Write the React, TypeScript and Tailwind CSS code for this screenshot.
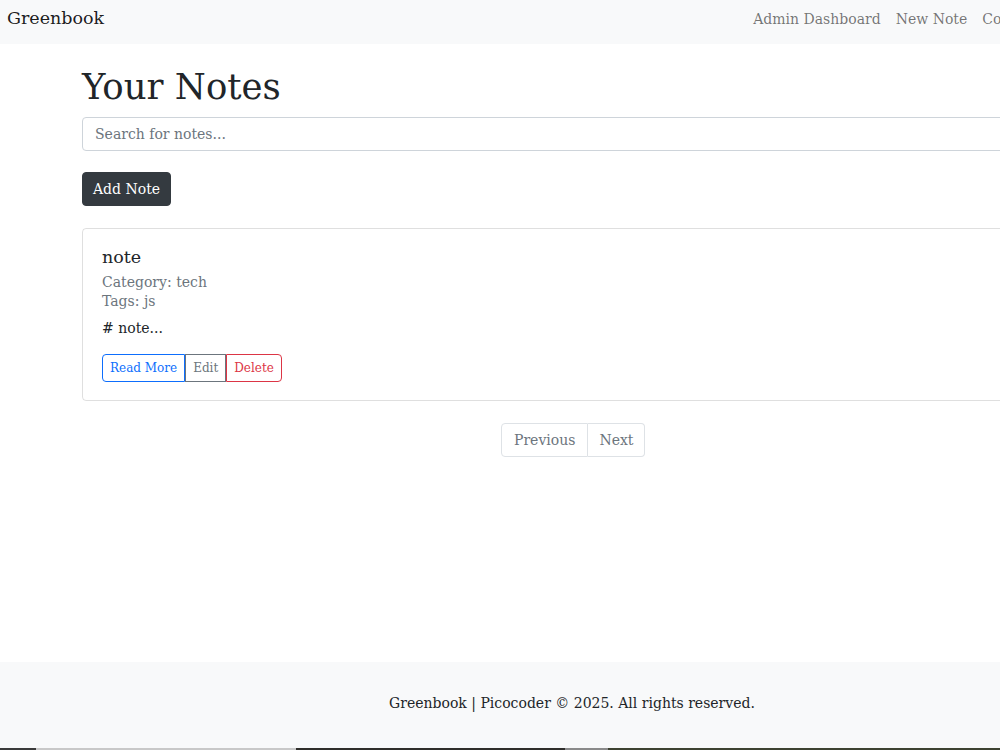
export default function App() {
  return (
    <div className="w-[1000px] h-[750px] overflow-hidden bg-white text-[#212529] font-['DejaVu_Serif',serif]">
      <div className="w-[1304px] flex flex-col h-[748px]">
        <nav className="bg-[#f8f9fa] h-[44px] flex items-start pt-[6px] px-[7px]">
          <span className="text-[17.5px] leading-[24px] text-black/90">Greenbook</span>
          <div className="flex gap-[15px] ml-[649px] pt-[2px] text-[14px] leading-[22px] text-black/55">
            <span>Admin Dashboard</span>
            <span>New Note</span>
            <span>Contact</span>
          </div>
        </nav>

        <main className="flex-1 w-[1140px] mx-auto">
          <h1 className="text-[35.5px] leading-[48px] mt-[19px] mb-[6px] font-normal">Your Notes</h1>
          <div className="flex">
            <input
              placeholder="Search for notes..."
              className="flex-1 h-[34px] border border-[#ced4da] rounded-l px-[12px] text-[14px] placeholder:text-[#6c757d] outline-none"
            />
            <button className="h-[34px] px-[12px] border border-[#0d6efd] text-[#0d6efd] rounded-r text-[14px]">Search</button>
          </div>
          <button className="mt-[21px] h-[34px] px-[10px] bg-[#343a40] text-white rounded text-[14px] border border-[#343a40]">
            Add Note
          </button>

          <div className="mt-[22px] border border-black/[.125] rounded px-[19px] pt-[16px] pb-[18px]">
            <h5 className="text-[17.5px] leading-[24px] mb-[4px]">note</h5>
            <p className="text-[#6c757d] text-[14px] leading-[19px]">Category: tech</p>
            <p className="text-[#6c757d] text-[14px] leading-[19px]">Tags: js</p>
            <p className="text-[14px] mt-[8px] leading-[19px]"># note...</p>
            <div className="flex mt-[16px]">
              <button className="h-[28px] px-[7px] text-[12px] text-[#0d6efd] border border-[#0d6efd] rounded-l">Read More</button>
              <button className="h-[28px] px-[7px] text-[12px] text-[#6c757d] border border-[#6c757d]">Edit</button>
              <button className="h-[28px] px-[7px] text-[12px] text-[#dc3545] border border-[#dc3545] rounded-r">Delete</button>
            </div>
          </div>

          <div className="flex mt-[22px] ml-[419px]">
            <span className="h-[34px] px-[12px] flex items-center text-[14px] text-[#6c757d] border border-[#dee2e6] rounded-l">Previous</span>
            <span className="h-[34px] px-[11px] flex items-center text-[14px] text-[#6c757d] border border-l-0 border-[#dee2e6] rounded-r">Next</span>
          </div>
        </main>

        <footer className="bg-[#f8f9fa] h-[86px] flex items-center">
          <p className="w-[1144px] text-center text-[14px] pb-[4px]">Greenbook | Picocoder © 2025. All rights reserved.</p>
        </footer>
      </div>
      <div className="h-[2px] flex">
        <div className="w-[36px] bg-[#3a3a3a]" />
        <div className="w-[260px] bg-[#c8c8c8]" />
        <div className="w-[269px] bg-[#2f2e2b]" />
        <div className="w-[43px] bg-[#8a8a8a]" />
        <div className="flex-1 bg-[#3d4231]" />
      </div>
    </div>
  );
}
